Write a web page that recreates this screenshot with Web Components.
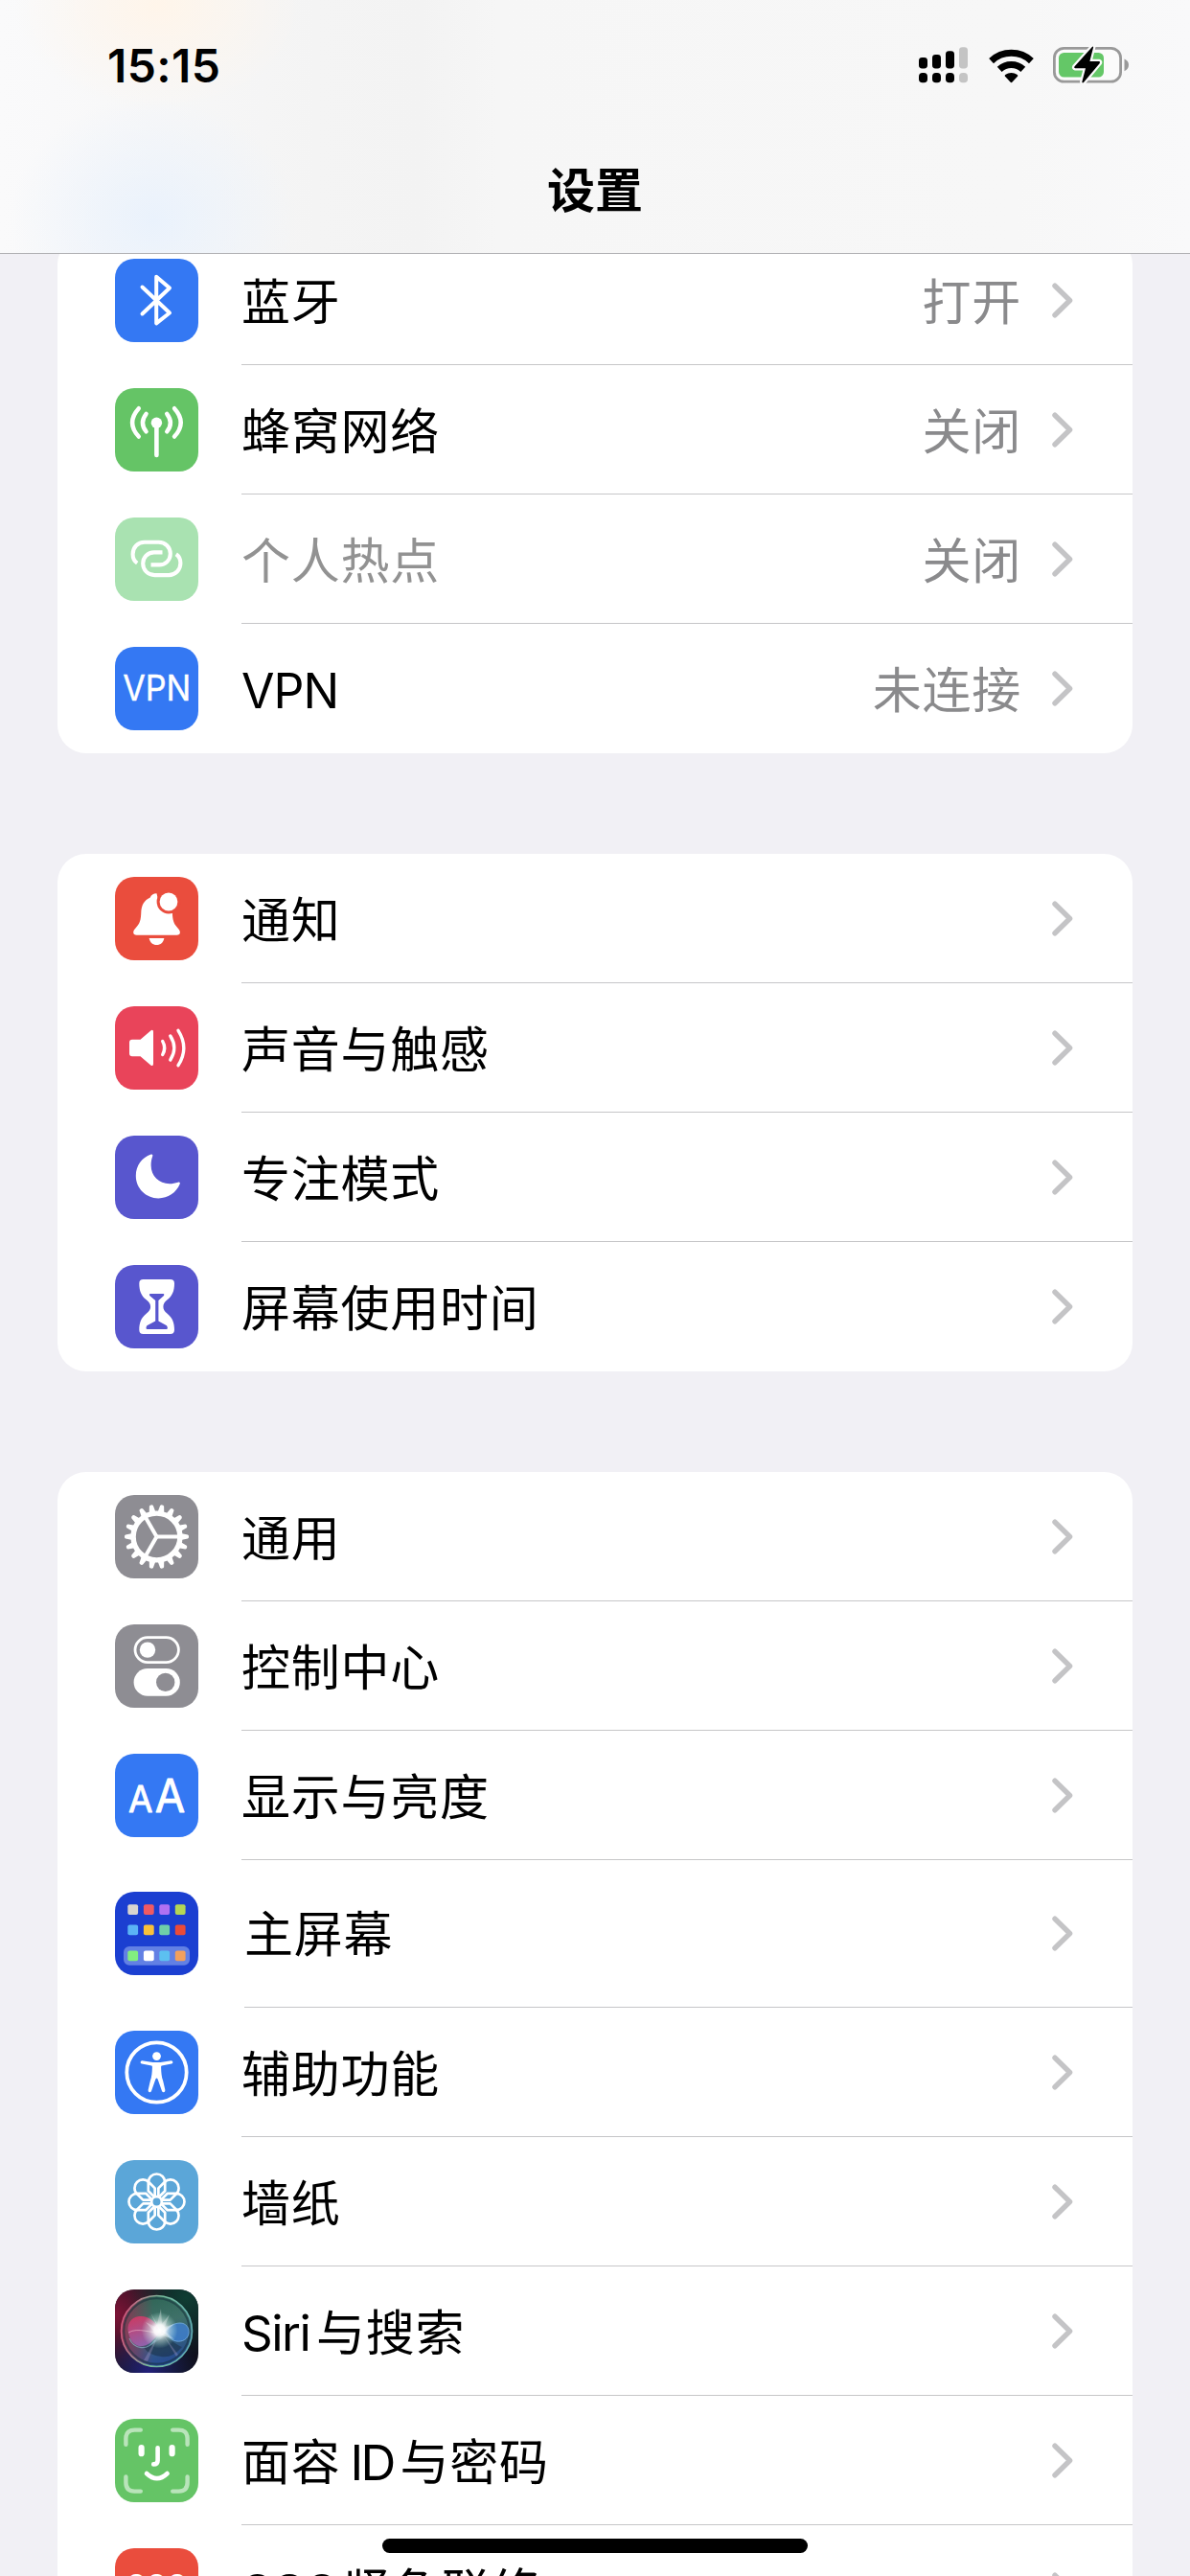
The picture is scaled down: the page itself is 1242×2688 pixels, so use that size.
<!DOCTYPE html>
<html lang="zh-CN">
<head>
<meta charset="utf-8">
<title>设置</title>
<style>
html,body{margin:0;padding:0}
body{width:1242px;height:2688px;overflow:hidden;background:#f1f0f5;font-family:Inter,"Noto Sans CJK SC",sans-serif;color:#000}
</style>
</head>
<body>
<settings-screen>
  <status-bar slot="header" time="15:15"></status-bar>
  <nav-title slot="header">设置</nav-title>
  <settings-group>
    <settings-row icon="bluetooth">蓝牙<span slot="value">打开</span></settings-row>
    <settings-row icon="cellular">蜂窝网络<span slot="value">关闭</span></settings-row>
    <settings-row icon="hotspot" disabled>个人热点<span slot="value">关闭</span></settings-row>
    <settings-row icon="vpn"><span style="font-size:50px;letter-spacing:-1px">VPN</span><span slot="value">未连接</span></settings-row>
  </settings-group>
  <settings-group>
    <settings-row icon="bell">通知</settings-row>
    <settings-row icon="sound">声音与触感</settings-row>
    <settings-row icon="moon">专注模式</settings-row>
    <settings-row icon="hourglass">屏幕使用时间</settings-row>
  </settings-group>
  <settings-group>
    <settings-row icon="gear">通用</settings-row>
    <settings-row icon="toggles">控制中心</settings-row>
    <settings-row icon="display">显示与亮度</settings-row>
    <settings-row icon="home" tall>主屏幕</settings-row>
    <settings-row icon="access">辅助功能</settings-row>
    <settings-row icon="wallpaper">墙纸</settings-row>
    <settings-row icon="siri"><span style="margin-right:6.5px;letter-spacing:-1.5px">Siri</span>与搜索</settings-row>
    <settings-row icon="faceid">面容<span style="margin:0 7px 0 10px;letter-spacing:-2.8px">ID</span>与密码</settings-row>
    <settings-row icon="sos"><span style="margin-right:8px;letter-spacing:-2.2px">SOS</span>紧急联络</settings-row>
  </settings-group>
</settings-screen>

<script>
const BLUE='#3478f3', GREEN='#65c466', INDIGO='#5856ce', GREY='#8e8d93';

function gear(){
  const c=43.5; let d='';
  for(let i=0;i<18;i++){
    const a=i*Math.PI/9, p=(r,t)=>`${(c+r*Math.cos(t)).toFixed(2)} ${(c+r*Math.sin(t)).toFixed(2)}`;
    d+=`M${p(25.5,a-.135)}L${p(32.6,a-.062)}L${p(33.5,a-.03)}L${p(33.5,a+.03)}L${p(32.6,a+.062)}L${p(25.5,a+.135)}Z`;
  }
  let s='';
  for(const a of [0,120,240]) s+=`<path d="M43.5 43.5H66" transform="rotate(${a} 43.5 43.5)" stroke="#fff" stroke-width="4"/>`;
  return `<path d="${d}" fill="#fff"/><circle cx="43.5" cy="43.5" r="24.4" fill="none" stroke="#fff" stroke-width="5.4"/>${s}`;
}
function petals(){
  let s='';
  for(let i=0;i<8;i++) s+=`<path transform="translate(43.5 43.5) rotate(${i*45})" d="M-2.4 -5L-8.7 -11.3V-20.3A8.7 8.7 0 0 1 8.7 -20.3V-11.3L2.4 -5"/>`;
  return `<g fill="none" stroke="#fff" stroke-width="2.7" stroke-linejoin="round">${s}<circle cx="43.5" cy="43.5" r="5.3"/></g>`;
}
function homeGrid(){
  const xs=[13.3,29.9,46.3,62.8], rows=[[13.3,['#d8d5cf','#f05a63','#b071f2','#b4d654']],[34.5,['#5bb4f5','#fac13a','#6fd0a8','#eb4b38']],[61.4,['#82ee7f','#ffffff','#5cc0f0','#f2a05c']]];
  let s='<rect x="9" y="57" width="69" height="19.7" rx="6" fill="#6280e4"/>';
  for(const [y,cs] of rows) cs.forEach((c,i)=>s+=`<rect x="${xs[i]}" y="${y}" width="10.8" height="10.8" rx="2" fill="${c}"/>`);
  return s;
}
const L='fill="none" stroke="#fff" stroke-linecap="round" stroke-linejoin="round"';
const ICONS={
 bluetooth:[BLUE,`<path ${L} stroke-width="4" d="M28.5 29.5L57 56.5L43.2 67.3V18.7L57 30.5L28.5 57.5"/>`],
 cellular:[GREEN,`<circle cx="43.4" cy="36.3" r="5.7" fill="#fff"/><path ${L} stroke-width="4.6" d="M43.4 38V70"/><path ${L} stroke-width="4.4" d="M32.6 26.8Q25.2 36.3 32.6 45.4M54.2 26.8Q61.6 36.3 54.2 45.4M24.8 21.2Q11.4 36 24.8 50.6M62 21.2Q75.4 36 62 50.6"/>`],
 hotspot:['#a9e2b1',`<g fill="none" stroke="#fff" stroke-width="4.1"><path d="M23.2 47.6C20.3 45.6 18.6 42.4 18.6 38.2C18.6 31 24 25.7 30.8 25.7H45.6C52.6 25.7 57.8 31 57.8 37.8C57.8 44.4 52.8 49.4 46.2 49.4H37.5"/><path transform="rotate(180 43.5 42.9)" d="M23.2 47.6C20.3 45.6 18.6 42.4 18.6 38.2C18.6 31 24 25.7 30.8 25.7H45.6C52.6 25.7 57.8 31 57.8 37.8C57.8 44.4 52.8 49.4 46.2 49.4H37.5"/></g>`],
 vpn:[BLUE,`<text x="43.7" y="55.6" text-anchor="middle" font-size="37" textLength="71" lengthAdjust="spacingAndGlyphs" fill="#fff" stroke="#fff" stroke-width=".4">VPN</text>`],
 bell:['#ea4d3d',`<path fill="#fff" d="M43.5 17.2C40 17.2 37.6 19 36.8 21.4C30.5 24.2 27.6 29.5 27.3 37C27 45 26 48.6 22.3 52.4C20 54.8 19.2 56.2 19.2 58C19.2 59.8 20.6 60.8 22.6 60.8H64.6C66.6 60.8 67.9 59.8 67.9 58C67.9 56.2 67 54.8 64.8 52.4C61.4 48.8 60.2 45.4 59.9 38L56 37L45 24Z"/><circle cx="56" cy="26" r="12.4" fill="#ea4d3d"/><circle cx="56" cy="26" r="9.4" fill="#fff"/><path fill="#fff" d="M35.6 64H51.4C50.4 68.4 47.6 71 43.5 71S36.6 68.4 35.6 64Z"/>`],
 sound:['#e9445a',`<path fill="#fff" d="M18 34.8H26.5L37 25.7Q40 23.6 40 26.8V60Q40 63.4 37 61.2L26.5 52.2H18Q15 52.2 15 49.2V37.8Q15 34.8 18 34.8Z"/><path ${L} stroke-width="3.4" d="M49.7 36.5Q53.7 43.5 49.7 50.5M57.8 31Q65.8 43.5 57.8 56M66 25.3Q77.6 43.5 66 61.7"/>`],
 moon:[INDIGO,`<path fill="#fff" d="M37.6 19.6C28 23 21.8 31.5 21.8 42C21.8 55 32.3 65.4 45.3 65.4C55.3 65.4 64 59.6 67.7 50.6C68.3 49 67.4 48.2 65.8 48.7C63 49.6 60 50.2 57 50.2C46 50.2 37.6 42 37.6 31C37.6 27.5 38.2 24.5 39.2 21.5C39.7 20 39 19.1 37.6 19.6Z"/>`],
 hourglass:[INDIGO,`<path fill="#fff" d="M29.5 15H57.7Q62 15 62 19.2C62 27 60 32 54.6 36.3C51.6 38.7 50.4 40.6 50.4 43.5S51.6 48.3 54.6 50.7C60 55 62 60 62 67.8Q62 72 57.7 72H29.5Q25.3 72 25.3 67.8C25.3 60 27.3 55 32.7 50.7C35.7 48.3 37.1 46.4 37.1 43.5S35.7 38.7 32.7 36.3C27.3 32 25.3 27 25.3 19.2Q25.3 15 29.5 15Z"/><path fill="${INDIGO}" d="M36.6 30H50.6Q52 30.4 51 32L45.4 37V58.6L54 63.3Q55.8 66.6 54 67H33.4Q31.6 66.6 33.3 63.3L42.2 58.6V37L36.2 32Q35.3 30.4 36.6 30Z"/>`],
 gear:[GREY,gear()],
 toggles:[GREY,`<rect x="21" y="13.6" width="45.4" height="26" rx="13" fill="none" stroke="#fff" stroke-width="2.8"/><circle cx="34" cy="26.6" r="8.2" fill="#fff"/><rect x="19.6" y="46" width="48.2" height="28.8" rx="14.4" fill="#fff"/><circle cx="52.7" cy="60.4" r="9.7" fill="${GREY}"/>`],
 display:[BLUE,`<g fill="#fff" stroke="#fff" stroke-width=".8" stroke-linejoin="round"><text x="13.9" y="61.4" font-size="37.5" textLength="25.5" lengthAdjust="spacingAndGlyphs">A</text><text x="41.7" y="61.4" font-size="48.5" textLength="31.5" lengthAdjust="spacingAndGlyphs">A</text></g>`],
 home:['#1b3fd1',homeGrid()],
 access:[BLUE,`<circle cx="43.5" cy="43.5" r="31.2" fill="none" stroke="#fff" stroke-width="3.8"/><circle cx="43.5" cy="26.6" r="4.4" fill="#fff"/><path fill="#fff" d="M28.3 31.3L39.5 33H47.5L58.7 31.3Q60.4 31.3 60.4 32.9Q60.4 34.2 59 34.4L48.8 36.4Q48 36.6 48.1 38C48.3 44 48.6 48 50.2 52.5L52.4 62Q52.5 64 51 64.3Q49.6 64.4 49 63L44.6 50.5Q43.5 48.6 42.4 50.5L38 63Q37.4 64.4 36 64.3Q34.5 64 34.6 62L36.8 52.5C38.4 48 38.7 44 38.9 38Q39 36.6 38.2 36.4L28 34.4Q26.6 34.2 26.6 32.9Q26.6 31.3 28.3 31.3Z"/>`],
 wallpaper:['#5ba6d8',petals()],
 siri:['#10101c',`<defs>
  <radialGradient id="a" cx="0" cy=".3" r=".75"><stop offset="0" stop-color="#7d1436"/><stop offset="1" stop-color="#7d1436" stop-opacity="0"/></radialGradient>
  <radialGradient id="b" cx=".85" cy=".1" r=".7"><stop offset="0" stop-color="#0f3d33"/><stop offset="1" stop-color="#0f3d33" stop-opacity="0"/></radialGradient>
  <radialGradient id="c" cx=".4" cy="1" r=".6"><stop offset="0" stop-color="#24207c"/><stop offset="1" stop-color="#1a2a66" stop-opacity="0"/></radialGradient>
  <linearGradient id="d" x1=".2" y1="0" x2=".5" y2="1"><stop offset="0" stop-color="#2d6b58"/><stop offset=".45" stop-color="#44786f"/><stop offset="1" stop-color="#284f9c"/></linearGradient>
  <linearGradient id="e" x1="0" y1=".3" x2="1" y2=".5"><stop offset="0" stop-color="#d8527c"/><stop offset=".5" stop-color="#74b99a"/><stop offset="1" stop-color="#62b0b4"/></linearGradient>
  <linearGradient id="f" x1="0" y1="0" x2=".3" y2="1"><stop offset="0" stop-color="#d8365f"/><stop offset="1" stop-color="#9a62b0"/></linearGradient>
  <radialGradient id="g"><stop offset="0" stop-color="#fff"/><stop offset=".3" stop-color="#fff" stop-opacity=".92"/><stop offset=".55" stop-color="#e4f6f0" stop-opacity=".5"/><stop offset="1" stop-color="#bfe" stop-opacity="0"/></radialGradient>
  <linearGradient id="h" x1="0" y1="0" x2="1" y2="0"><stop offset="0" stop-color="#a02850"/><stop offset=".45" stop-color="#a02850" stop-opacity="0"/></linearGradient></defs>
  <rect width="87" height="87" fill="url(#a)"/><rect width="87" height="87" fill="url(#b)"/><rect width="87" height="87" fill="url(#c)"/>
  <circle cx="43.5" cy="43.5" r="37.3" fill="url(#d)" opacity=".9"/><circle cx="43.5" cy="43.5" r="37.3" fill="url(#h)" opacity=".8"/>
  <circle cx="43.5" cy="43.5" r="37" fill="none" stroke="url(#e)" stroke-width="1.6"/><circle cx="43.5" cy="43.5" r="34.3" fill="none" stroke="#14303a" stroke-opacity=".55" stroke-width="2"/>
  <path fill="#11202b" opacity=".4" d="M30 60Q44 56 52 48Q64 58 70 60Q60 72 48 70Q34 68 30 60Z"/>
  <path fill="url(#f)" opacity=".9" d="M48 44C42 32 34 27 25 28C16 29 12 37 14 45C16 55 22 60 29 59C38 58 42 49 48 44Z"/>
  <path fill="none" stroke="#f2b9cd" stroke-opacity=".6" stroke-width="1" d="M14 45C24 39 38 46 48 45"/><path fill="none" stroke="#8fc3d8" stroke-opacity=".6" stroke-width="1.2" d="M15 51C20 63 34 64 42 53"/>
  <path fill="#3f7fcb" opacity=".85" d="M50 44C56 38 62 35 68 35C74 35 78 40 77 46C76 52 70 55 64 54C58 53 55 47 50 44Z"/>
  <path fill="none" stroke="#7fb8ea" stroke-opacity=".7" stroke-width="1" d="M50 44C57 38 62 35 68 35C74 35 78 40 77 46C76 52 70 55 64 54C58 53 55 47 50 44"/>
  <path fill="#b9a9d8" opacity=".3" d="M46 46L30 74L34 75ZM50 47L66 68L64 70Z"/>
  <circle cx="46.5" cy="42.5" r="19" fill="url(#g)"/><path fill="#fff" opacity=".3" d="M46 43L37 24L44 36L48 20L49 36L57 26L52 39L62 36L53 44L62 52L49 48L40 43L32 34L42 39Z"/>`],
 faceid:[GREEN,`<path ${L} stroke-width="4.4" stroke-opacity=".55" d="M11.4 26.8V20.6Q11.4 11.6 20.4 11.6H26.8M60.2 11.6H66.6Q75.6 11.6 75.6 20.6V26.8M11.4 60.4V66.6Q11.4 75.6 20.4 75.6H26.8M60.2 75.6H66.6Q75.6 75.6 75.6 66.6V60.4"/><path ${L} stroke-width="6.2" d="M27.6 30.2V36.2M59.6 30.2V36.2"/><path ${L} stroke-width="4.6" d="M44.6 30.3V43.4Q44.6 47.4 40.2 47.4M33 57Q43.8 67.4 54.6 57"/>`],
 sos:['#ea4d3d',`<text x="43.5" y="51.5" text-anchor="middle" font-size="34" font-weight="600" textLength="62" lengthAdjust="spacingAndGlyphs" fill="#fff">SOS</text>`]
};

function define(name,render){
  customElements.define(name,class extends HTMLElement{
    connectedCallback(){ if(!this.shadowRoot) this.attachShadow({mode:'open'}).innerHTML=render(this); }
  });
}

define('app-icon',el=>{
  const [bg,art]=ICONS[el.getAttribute('name')];
  return `<style>:host{display:block;width:87px;height:87px;flex:none;border-radius:20px;overflow:hidden;background:${bg}}svg{display:block}text{font-family:Inter,sans-serif;letter-spacing:0}</style><svg width="87" height="87" viewBox="0 0 87 87">${art}</svg>`;
});

define('settings-row',el=>{
  const tall=el.hasAttribute('tall'), off=el.hasAttribute('disabled');
  return `<style>
  :host{display:flex;align-items:center;height:${tall?154:135}px;padding-left:60px;box-sizing:border-box;font-size:51px;line-height:72px;letter-spacing:.75px}
  app-icon{margin-bottom:${tall?1:0}px}
  .main{flex:1;align-self:stretch;display:flex;align-items:center;margin-left:${tall?48:45}px;padding-right:62px;border-bottom:1px solid var(--sep,#c6c6c8)}
  .label{flex:1;margin-top:${tall?3:6}px;${off?'color:#929292;':''}}
  .value{color:#8a8a8c;margin-top:6px;margin-right:32px}
  svg{display:block}
  </style><app-icon name="${el.getAttribute('icon')}"></app-icon>
  <div class="main"><div class="label"><slot></slot></div><div class="value"><slot name="value"></slot></div>
  <svg width="22" height="37" viewBox="0 0 22 37"><path d="M3 3.2L18.6 18.5L3 33.8" fill="none" stroke="#c4c4c6" stroke-width="5.4" stroke-linecap="round" stroke-linejoin="round"/></svg></div>`;
});

define('settings-group',()=>`<style>:host{display:block;background:#fff;border-radius:30px;overflow:hidden;flex:none}::slotted(:last-child){--sep:transparent}</style><slot></slot>`);

define('nav-title',()=>`<style>:host{display:flex;justify-content:center;align-items:center;height:130px;font-size:50px;font-weight:600;line-height:72px}</style><slot></slot>`);

define('status-bar',el=>`<style>
  :host{display:flex;justify-content:space-between;align-items:center;height:134px;padding:0 63px 0 112px;box-sizing:border-box}
  time{font-size:48px;font-weight:600;line-height:60px;letter-spacing:.4px;margin-top:3px}
  div{display:flex;align-items:center;margin-top:2px}svg{display:block}
  </style><time>${el.getAttribute('time')}</time>
  <div>
  <svg width="51" height="38" viewBox="0 0 51 38" style="margin-right:22px"><g><rect y="11" width="9" height="11.5" rx="3.4"/><rect x="14" y="8" width="9" height="14.5" rx="3.4"/><rect x="28" y="4.2" width="9" height="18.3" rx="3.4"/><rect x="42" y=".2" width="9" height="22.3" rx="3.4" fill="#c4c4c4"/><rect y="27" width="9" height="10.3" rx="3.8"/><rect x="14" y="27" width="9" height="10.3" rx="3.8"/><rect x="28" y="27" width="9" height="10.3" rx="3.8"/><rect x="42" y="27" width="9" height="10.3" rx="3.8" fill="#c4c4c4"/></g></svg>
  <svg width="47" height="37" viewBox="0 0 47 37" style="margin-right:20px"><path d="M23.5 36.2Q23 36.2 22.4 35.6L16.8 29.4Q16.4 28.6 17.2 28C20.8 25.2 26.2 25.2 29.8 28Q30.6 28.6 30.2 29.4L24.6 35.6Q24 36.2 23.5 36.2Z"/><path d="M11.2 22.4C18.1 15.8 28.9 15.8 35.8 22.4M2.6 13.6C14.2 2.6 32.8 2.6 44.4 13.6" fill="none" stroke="#000" stroke-width="7"/></svg>
  <svg width="80" height="40" viewBox="0 0 80 40"><rect x="1.4" y="2.4" width="69.2" height="34.8" rx="10" fill="#fbfbfb" stroke="#999" stroke-width="2.8"/><rect x="6" y="7" width="47" height="25.6" rx="5.5" fill="#64c767"/><path d="M74.5 13.5Q79 15.5 79 19.8T74.5 26.2Z" fill="#999"/><path d="M42.2 1Q41.6 0 40.6 1.2L22.4 21.4Q21.6 23 23.2 23.2H34L30.3 37.4Q30.6 39 32 38L48.8 17.9Q49.6 16.3 48 16H38.4Z" fill="#000" stroke="#fbfbfb" stroke-width="4.5" paint-order="stroke" stroke-linejoin="round"/></svg>
  </div>`);

define('settings-screen',()=>`<style>
  :host{display:block;position:relative;width:1242px;height:2688px;overflow:hidden}
  header{position:relative;z-index:1;height:265px;box-sizing:border-box;border-bottom:1px solid #b1b1b4;
   background:radial-gradient(150px 110px at 165px 5px,#fff5ea 0,#fff5ea00 100%),radial-gradient(150px 130px at 160px 230px,#eaf2fc 0,#eaf2fc00 100%),linear-gradient(90deg,#fafafb 0,#f4f4f4 330px,#f3f3f3 440px,#f6f6f6 520px,#f7f7f7 1060px,#f9f9fa 1242px)}
  main{display:flex;flex-direction:column;gap:105px;padding:0 60px;margin-top:-19px}
  .bar{position:absolute;left:399px;top:2649px;width:444px;height:15px;border-radius:8px;background:#000}
  </style><header><slot name="header"></slot></header><main><slot></slot></main><div class="bar"></div>`);
</script>
</body>
</html>
